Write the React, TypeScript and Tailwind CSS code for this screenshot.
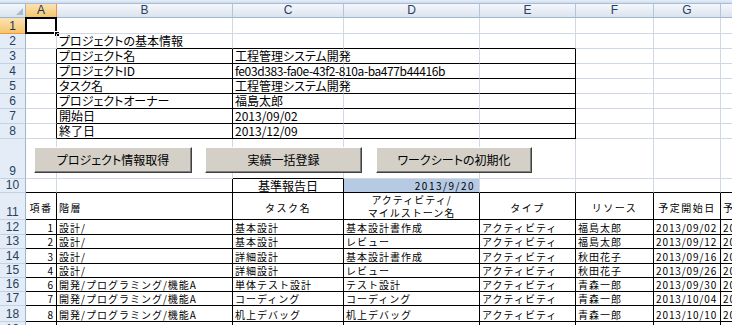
import type { ReactNode } from 'react';

type CellDef = { t?: ReactNode; r?: boolean; b?: boolean; cls?: string };

const COLS = ['w-[31px]', 'w-[176px]', 'w-[111px]', 'w-[136px]', 'w-[96px]', 'w-[78px]', 'w-[67px]', 'w-[80px]'];
const LETTERS = ['A', 'B', 'C', 'D', 'E', 'F', 'G', 'H'];

const INFO = "items-end text-[12px] leading-[14px] pl-[2px] [font-feature-settings:'palt']";
const DATA = 'items-end text-[10px] leading-[13px] tracking-[1px] pl-[2px]';
const DATE = 'items-end text-[10px] leading-[13px] tracking-[0.9px] pl-[2px]';
const HEAD = 'items-center justify-center text-[10px] leading-[13px] tracking-[1.5px] pt-[2px]';

function Row({ n, h, sel, cells, children }: { n: number; h: string; sel?: boolean; cells: CellDef[]; children?: ReactNode }) {
  return (
    <div className={`relative flex ${h}`}>
      <div
        className={`w-[26px] shrink-0 flex items-end justify-center border-r border-b text-[12px] leading-[14px] font-['Liberation_Sans',sans-serif] ${
          sel
            ? 'bg-linear-to-b from-[#fbe3b4] to-[#f5c56a] border-r-[#f29536] border-b-[#f29536] text-[#1f3150]'
            : 'bg-[#e4ecf7] border-r-[#9eb6ce] border-b-[#c3d2e5] text-[#27415e]'
        }`}
      >
        {n}
      </div>
      {COLS.map((w, i) => {
        const c = cells[i] ?? {};
        return (
          <div
            key={i}
            className={`${w} shrink-0 relative flex whitespace-nowrap border-r border-b ${
              c.r ? 'border-r-black' : 'border-r-[#d0d7e5]'
            } ${c.b ? 'border-b-black' : 'border-b-[#d0d7e5]'} ${c.cls ?? ''}`}
          >
            {c.t}
          </div>
        );
      })}
      {children}
    </div>
  );
}

const info = [
  ['プロジェクト名', '工程管理システム開発'],
  ['プロジェクトID', 'fe03d383-fa0e-43f2-810a-ba477b44416b'],
  ['タスク名', '工程管理システム開発'],
  ['プロジェクトオーナー', '福島太郎'],
  ['開始日', '2013/09/02'],
  ['終了日', '2013/12/09'],
];

const tasks = [
  ['1', '設計/', '基本設計', '基本設計書作成', '福島太郎', '2013/09/02', '2013/09/11'],
  ['2', '設計/', '基本設計', 'レビュー', '福島太郎', '2013/09/12', '2013/09/13'],
  ['3', '設計/', '詳細設計', '基本設計書作成', '秋田花子', '2013/09/16', '2013/09/25'],
  ['4', '設計/', '詳細設計', 'レビュー', '秋田花子', '2013/09/26', '2013/09/27'],
  ['6', '開発/プログラミング/機能A', '単体テスト設計', 'テスト設計', '青森一郎', '2013/09/30', '2013/10/03'],
  ['7', '開発/プログラミング/機能A', 'コーディング', 'コーディング', '青森一郎', '2013/10/04', '2013/10/09'],
  ['8', '開発/プログラミング/機能A', '机上デバッグ', '机上デバッグ', '青森一郎', '2013/10/10', '2013/10/11'],
];
const taskHeights = ['h-[15px]', 'h-[14px]', 'h-[15px]', 'h-[14px]', 'h-[14px]', 'h-[14px]', 'h-[16px]'];

function Button({ label, w }: { label: string; w: string }) {
  return (
    <div
      className={`${w} h-[26px] shrink-0 flex items-center justify-center bg-[#d4d0c8] border border-t-white border-l-white border-r-[#404040] border-b-[#404040] shadow-[inset_-1px_-1px_0_#808080] text-[12px] text-black [font-feature-settings:'palt']`}
    >
      {label}
    </div>
  );
}

export default function App() {
  return (
    <div className="relative w-[732px] h-[325px] overflow-hidden bg-white text-black font-['Noto_Sans_CJK_JP',sans-serif]">
      {/* 上部の帯 */}
      <div className="h-[4px] bg-linear-to-b from-[#e6eef8] to-[#cddced] border-b border-[#a7bdd6]" />

      {/* 列見出し */}
      <div className="flex h-[14px] font-['Liberation_Sans',sans-serif] text-[12px] leading-[13px]">
        <div className="w-[26px] shrink-0 relative bg-linear-to-b from-[#f3f7fb] to-[#dae3ee] border-r border-b border-r-[#9eb6ce] border-b-[#9eb6ce]">
          <div className="absolute right-[2px] bottom-[2px] w-0 h-0 border-l-[7px] border-l-transparent border-b-[7px] border-b-[#a9bcd2]" />
        </div>
        {COLS.map((w, i) => (
          <div
            key={i}
            className={`${w} shrink-0 flex items-center justify-center border-r border-b ${
              i === 0
                ? 'bg-linear-to-b from-[#fbe3b4] to-[#f5c56a] border-r-[#f29536] border-b-[#f29536] text-[#1f3150]'
                : 'bg-linear-to-b from-[#f5f8fc] to-[#dbe3ee] border-r-[#b3c5da] border-b-[#9eb6ce] text-[#27415e]'
            }`}
          >
            {LETTERS[i]}
          </div>
        ))}
      </div>

      {/* 行1：選択セル */}
      <Row
        n={1}
        h="h-[16px]"
        sel
        cells={[
          {
            t: (
              <>
                <div className="absolute -left-[1px] -top-[1px] w-[32px] h-[17px] border-2 border-black" />
                <div className="absolute -right-[4px] -bottom-[4px] w-[6px] h-[6px] bg-black border border-white" />
              </>
            ),
          },
        ]}
      />

      {/* プロジェクトの基本情報 */}
      <Row
        n={2}
        h="h-[15px]"
        cells={[{}, { t: 'プロジェクトの基本情報', b: true, cls: INFO }, { b: true }, { b: true }, { b: true }]}
      />
      {info.map(([label, value], i) => (
        <Row
          key={label}
          n={i + 3}
          h="h-[15px]"
          cells={[
            { r: true },
            { t: label, r: true, b: true, cls: INFO },
            { t: value, b: true, cls: i === 1 ? `${INFO} tracking-[-0.4px]` : INFO },
            { b: true },
            { b: true, r: true },
          ]}
        />
      ))}

      {/* ボタン行 */}
      <Row n={9} h="h-[40px]" cells={[{}, {}, { b: true }]}>
        <div className="absolute inset-0 flex items-start pl-[34px] pt-[8px]">
          <Button label="プロジェクト情報取得" w="w-[158px]" />
          <div className="w-[13px] shrink-0" />
          <Button label="実績一括登録" w="w-[157px]" />
          <div className="w-[14px] shrink-0" />
          <Button label="ワークシートの初期化" w="w-[156px]" />
        </div>
      </Row>

      {/* 基準報告日 */}
      <Row
        n={10}
        h="h-[14px]"
        cells={[
          { b: true },
          { b: true, r: true },
          { t: '基準報告日', b: true, r: true, cls: 'items-end justify-center text-[12px] leading-[13px]' },
          {
            t: '2013/9/20',
            b: true,
            cls: 'items-end justify-end pr-[4px] text-[10px] leading-[12px] tracking-[1.5px] bg-[#d5e1f1] bg-[radial-gradient(#b4c8e3_0.7px,transparent_0.8px)] bg-[length:2px_2px]',
          },
          { b: true },
          { b: true },
          { b: true },
          { b: true },
        ]}
      />

      {/* 見出し */}
      <Row
        n={11}
        h="h-[27px]"
        cells={[
          { t: '項番', r: true, b: true, cls: HEAD },
          { t: '階層', r: true, b: true, cls: 'items-center pt-[2px] pl-[2px] text-[10px] leading-[13px] tracking-[1.5px]' },
          { t: 'タスク名', r: true, b: true, cls: HEAD },
          {
            t: (
              <div className="flex flex-col items-center">
                <span>アクティビティ/</span>
                <span>マイルストーン名</span>
              </div>
            ),
            r: true,
            b: true,
            cls: 'items-center justify-center text-[10px] leading-[13px] tracking-[1px]',
          },
          { t: 'タイプ', r: true, b: true, cls: HEAD },
          { t: 'リソース', r: true, b: true, cls: HEAD },
          { t: '予定開始日', r: true, b: true, cls: HEAD },
          { t: '予定終了日', r: true, b: true, cls: 'items-center pt-[2px] pl-[2px] text-[10px] leading-[13px] tracking-[1.5px]' },
        ]}
      />

      {/* タスク一覧 */}
      {tasks.map((t, i) => (
        <Row
          key={t[0]}
          n={i + 12}
          h={taskHeights[i]}
          cells={[
            { t: t[0], r: true, b: true, cls: 'items-end justify-end pr-[3px] text-[10px] leading-[13px]' },
            { t: t[1], r: true, b: true, cls: DATA },
            { t: t[2], r: true, b: true, cls: DATA },
            { t: t[3], r: true, b: true, cls: DATA },
            { t: 'アクティビティ', r: true, b: true, cls: DATA },
            { t: t[4], r: true, b: true, cls: DATA },
            { t: t[5], r: true, b: true, cls: DATE },
            { t: t[6], r: true, b: true, cls: DATE },
          ]}
        />
      ))}
      <Row
        n={19}
        h="h-[15px]"
        cells={[{ r: true }, { r: true }, { r: true }, { r: true }, { r: true }, { r: true }, { r: true }, { r: true }]}
      />
    </div>
  );
}
